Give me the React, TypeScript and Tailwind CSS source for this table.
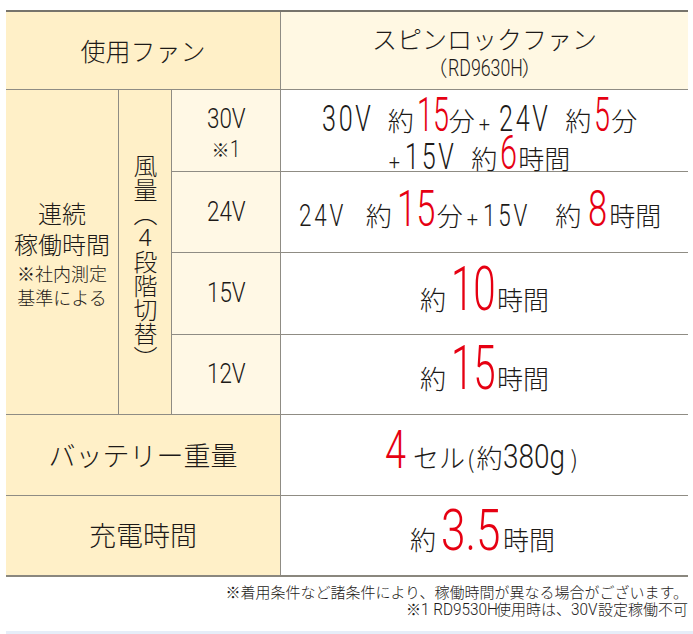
import type { ReactNode } from 'react'

const JP = 'font-["Noto_Sans_CJK_JP","Noto_Sans",sans-serif]'
const NUM = 'font-["Roboto","Liberation_Sans",sans-serif] font-light'

// condensed number: outer box holds the final width, inner text is squeezed horizontally
function C({ t, w, s, f }: { t: string; w: string; s: string; f: string }) {
  return (
    <span className={`inline-block whitespace-nowrap ${w}`}>
      <span className={`inline-block origin-left leading-none ${s} ${NUM} ${f}`}>{t}</span>
    </span>
  )
}

function Kan({ children }: { children: ReactNode }) {
  return <span className={`${JP} text-[26px] font-light leading-none text-[#1d1a18]`}>{children}</span>
}

function Plus({ m = 'mx-[3px]' }: { m?: string }) {
  return <span className={`${NUM} ${m} text-[20px] leading-none text-[#1d1a18]`}>+</span>
}

const RED = 'text-[#e60012]'

export default function App() {
  return (
    <div className="h-[634px] w-[693px] overflow-hidden bg-white pt-[10px] text-[#1d1a18]">
      <div className="ml-[6px] grid w-[682px] grid-cols-[112px_52px_108px_1fr] grid-rows-[77px_81px_80px_81px_79px_80px_79px] gap-px border-t-2 border-b-2 border-t-[#77746c] border-b-[#8a877e] bg-[#8f8c84]">
        {/* header */}
        <div className={`col-span-3 flex items-center justify-center bg-[#fff0c8] ${JP} text-[25px] font-light`}>
          使用ファン
        </div>
        <div className={`flex flex-col items-center justify-center bg-[#fff8e3] ${JP} font-light`}>
          <span className="text-[25px] leading-[32px]">スピンロックファン</span>
          <span className="flex items-baseline text-[21px] leading-[26px]">
            <span>（</span>
            <C t="RD9630H" w="w-[74px]" s="scale-x-[0.74]" f="text-[24px]" />
            <span>）</span>
          </span>
        </div>

        {/* continuous run time */}
        <div className={`row-span-4 flex flex-col items-center justify-center bg-[#fff0c8] pt-[2px] ${JP} font-light`}>
          <span className="text-[24px] leading-[31px]">連続</span>
          <span className="text-[24px] leading-[31px]">稼働時間</span>
          <span className="mt-[2px] text-[18px] leading-[24px]">※社内測定</span>
          <span className="text-[18px] leading-[24px]">基準による</span>
        </div>
        <div className={`row-span-4 flex items-center justify-center bg-[#fff0c8] pt-[20px] ${JP} font-light`}>
          <span className="text-[24px] leading-none [writing-mode:vertical-rl]">
            風量（<span className={`${NUM} [text-combine-upright:all]`}>4</span>段階切替）
          </span>
        </div>

        <div className="flex flex-col items-center justify-center bg-[#fff8e5] pt-[4px]">
          <span className="leading-[30px]">
            <C t="30V" w="w-[39px]" s="scale-x-[0.8]" f="text-[28px]" />
          </span>
          <span className={`flex items-baseline ${JP} text-[18px] font-light leading-[24px]`}>
            ※<C t="1" w="w-[11px]" s="scale-x-[0.8]" f="text-[23px]" />
          </span>
        </div>
        <div className="flex flex-col items-center justify-center bg-white pb-[4px] pr-[10px]">
          <div className="flex h-[38px] items-baseline">
            <C t="30V" w="w-[52px]" s="scale-x-[0.68] tracking-[4px]" f="text-[37px]" />
            <span className="w-[14px]" />
            <Kan>約</Kan>
            <span className="w-[3px]" />
            <C t="15" w="w-[32px]" s="scale-x-[0.6]" f={`text-[48px] ${RED}`} />
            <Kan>分</Kan>
            <Plus m="ml-[4px] mr-[9px]" />
            <C t="24V" w="w-[52px]" s="scale-x-[0.68] tracking-[4px]" f="text-[37px]" />
            <span className="w-[14px]" />
            <Kan>約</Kan>
            <span className="w-[3px]" />
            <C t="5" w="w-[17px]" s="scale-x-[0.6]" f={`text-[48px] ${RED}`} />
            <Kan>分</Kan>
          </div>
          <div className="flex h-[38px] items-baseline">
            <Plus m="mr-[5px]" />
            <C t="15V" w="w-[52px]" s="scale-x-[0.68] tracking-[4px]" f="text-[37px]" />
            <span className="w-[14px]" />
            <Kan>約</Kan>
            <span className="w-[3px]" />
            <C t="6" w="w-[18px]" s="scale-x-[0.64]" f={`text-[48px] ${RED}`} />
            <Kan>時間</Kan>
          </div>
        </div>

        <div className="flex items-center justify-center bg-[#fff8e5]">
          <C t="24V" w="w-[39px]" s="scale-x-[0.8]" f="text-[28px]" />
        </div>
        <div className="flex items-center justify-center bg-white pb-[6px] pr-[9px]">
          <div className="flex items-baseline">
            <C t="24V" w="w-[50px]" s="scale-x-[0.7] tracking-[4px]" f="text-[32px]" />
            <span className="w-[17px]" />
            <Kan>約</Kan>
            <span className="w-[5px]" />
            <C t="15" w="w-[40px]" s="scale-x-[0.69]" f={`text-[50px] ${RED}`} />
            <Kan>分</Kan>
            <Plus m="ml-[4px] mr-[5px]" />
            <C t="15V" w="w-[54px]" s="scale-x-[0.7] tracking-[4px]" f="text-[32px]" />
            <span className="w-[18px]" />
            <Kan>約</Kan>
            <span className="w-[7px]" />
            <C t="8" w="w-[21px]" s="scale-x-[0.69]" f={`text-[50px] ${RED}`} />
            <Kan>時間</Kan>
          </div>
        </div>

        <div className="flex items-center justify-center bg-[#fff8e5]">
          <C t="15V" w="w-[39px]" s="scale-x-[0.8]" f="text-[28px]" />
        </div>
        <div className="flex items-center justify-center bg-white pb-[10px]">
          <div className="flex items-baseline">
            <Kan>約</Kan>
            <span className="w-[5px]" />
            <C t="10" w="w-[46px]" s="scale-x-[0.65]" f={`text-[62px] ${RED}`} />
            <Kan>時間</Kan>
          </div>
        </div>

        <div className="flex items-center justify-center bg-[#fff8e5]">
          <C t="12V" w="w-[39px]" s="scale-x-[0.8]" f="text-[28px]" />
        </div>
        <div className="flex items-center justify-center bg-white pb-[13px]">
          <div className="flex items-baseline">
            <Kan>約</Kan>
            <span className="w-[5px]" />
            <C t="15" w="w-[46px]" s="scale-x-[0.65]" f={`text-[62px] ${RED}`} />
            <Kan>時間</Kan>
          </div>
        </div>

        {/* battery */}
        <div className={`col-span-3 flex items-center justify-center bg-[#fff0c8] ${JP} text-[27px] font-light`}>
          バッテリー重量
        </div>
        <div className="flex items-center justify-center bg-white pb-[11px] pr-[4px]">
          <div className="flex items-baseline">
            <C t="4" w="w-[22px]" s="scale-x-[0.7]" f={`text-[54px] ${RED}`} />
            <span className="w-[6px]" />
            <Kan>セル</Kan>
            <span className={`${JP} px-[2px] text-[24px] font-light leading-none`}>(</span>
            <Kan>約</Kan>
            <C t="380g" w="w-[66px]" s="scale-x-[0.82]" f="text-[34px]" />
            <span className={`${JP} px-[2px] text-[24px] font-light leading-none`}>)</span>
          </div>
        </div>

        {/* charge */}
        <div className={`col-span-3 flex items-center justify-center bg-[#fff0c8] ${JP} text-[27px] font-light`}>
          充電時間
        </div>
        <div className="flex items-center justify-center bg-white pb-[12px] pr-[4px]">
          <div className="flex items-baseline">
            <Kan>約</Kan>
            <span className="w-[5px]" />
            <C t="3.5" w="w-[62px]" s="scale-x-[0.76]" f={`text-[58px] ${RED}`} />
            <Kan>時間</Kan>
          </div>
        </div>
      </div>

      <div className={`mt-[6px] w-[688px] text-right ${JP} text-[15px] font-light leading-[17px]`}>
        <p>※着用条件など諸条件により、稼働時間が異なる場合がございます。</p>
        <p>
          ※<C t="1 RD9530H" w="w-[75px]" s="scale-x-[0.9]" f="text-[17px]" />使用時は、
          <C t="30V" w="w-[27px]" s="scale-x-[0.9]" f="text-[17px]" />設定稼働不可
        </p>
      </div>

      <div className="ml-[6px] mt-[13px] h-[4px] w-[687px] bg-[#e6edf8]" />
    </div>
  )
}
